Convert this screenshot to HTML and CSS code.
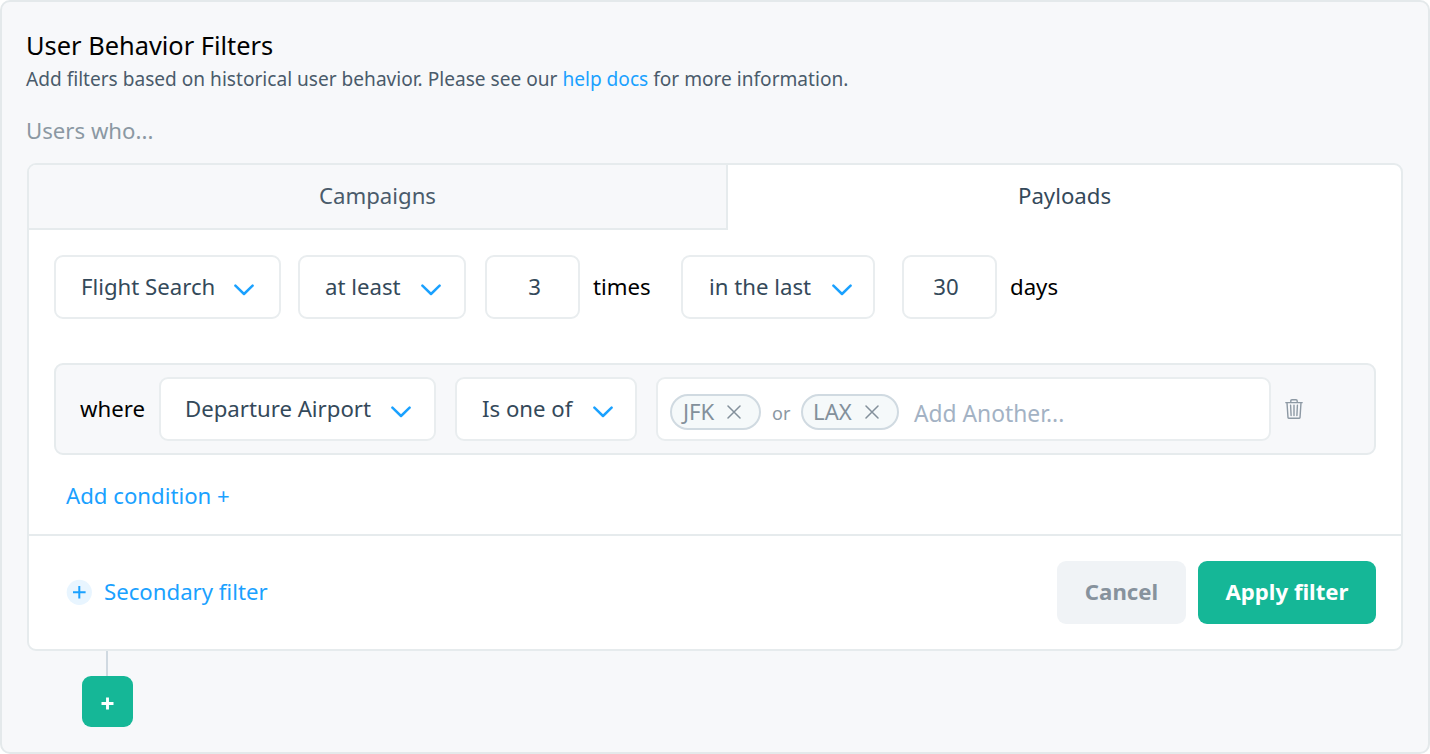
FILE: index.html
```html
<!DOCTYPE html>
<html lang="en">
<head>
<meta charset="utf-8">
<title>User Behavior Filters</title>
<link rel="stylesheet" href="styles.css">
</head>
<body>
<svg class="defs" width="0" height="0" aria-hidden="true">
  <symbol id="chevron" viewBox="0 0 20 12"><path d="M1.4 1.7 10 10l8.6-8.3" fill="none" stroke="currentColor" stroke-width="2.5" stroke-linecap="round" stroke-linejoin="round"/></symbol>
  <symbol id="cross" viewBox="0 0 14 14"><path d="M1 1l12 12M13 1 1 13" fill="none" stroke="currentColor" stroke-width="1.5" stroke-linecap="round"/></symbol>
</svg>
<main class="panel">
  <h1 class="title">User Behavior Filters</h1>
  <p class="subtitle">Add filters based on historical user behavior. Please see our <a class="link">help docs</a> for more information.</p>
  <p class="lead">Users who...</p>

  <section class="card">
    <nav class="tabs">
      <div class="tab tab-muted">Campaigns</div>
      <div class="tab tab-active">Payloads</div>
    </nav>

    <div class="rule">
      <div class="field w-event"><span>Flight Search</span><svg class="chevron"><use href="#chevron"/></svg></div>
      <div class="field w-compare"><span>at least</span><svg class="chevron"><use href="#chevron"/></svg></div>
      <div class="field number w-count">3</div>
      <span class="word word-times">times</span>
      <div class="field w-period"><span>in the last</span><svg class="chevron"><use href="#chevron"/></svg></div>
      <div class="field number w-days">30</div>
      <span class="word">days</span>
    </div>

    <div class="condition">
      <span class="where">where</span>
      <div class="field w-attribute"><span>Departure Airport</span><svg class="chevron"><use href="#chevron"/></svg></div>
      <div class="field w-operator"><span>Is one of</span><svg class="chevron"><use href="#chevron"/></svg></div>
      <div class="field values">
        <span class="chip chip-first">JFK<svg class="cross"><use href="#cross"/></svg></span>
        <span class="or">or</span>
        <span class="chip chip-second">LAX<svg class="cross"><use href="#cross"/></svg></span>
        <span class="placeholder">Add Another...</span>
      </div>
      <svg class="trash" viewBox="0 0 18 20"><g fill="none" stroke="currentColor" stroke-width="1.4" stroke-linejoin="round"><path d="M.3 3.6h17.4M5.8 3.4V2Q5.8.8 7 .8h4q1.2 0 1.2 1.2v1.4M2 3.8l1 14.8q0 .6.7.6h10.6q.7 0 .7-.6l1-14.8"/><path d="M5.6 6.3l.5 10.2M9 6.3v10.2M12.4 6.3l-.5 10.2" stroke-linecap="round"/></g></svg>
    </div>

    <a class="link add-condition">Add condition +</a>

    <footer class="actions">
      <svg class="badge" viewBox="0 0 26 26"><circle cx="13.3" cy="13.3" r="12.6" fill="#e8f5ff"/><path d="M7 13.3h12.6M13.3 7v12.6" stroke="#1aa1ff" stroke-width="2"/></svg>
      <a class="link secondary">Secondary filter</a>
      <button class="button cancel">Cancel</button>
      <button class="button apply">Apply filter</button>
    </footer>
  </section>

  <div class="branch">
    <div class="stem"></div>
    <button class="add"><svg width="13" height="13" viewBox="0 0 13 13"><path d="M.5 6.5h12M6.5.5v12" stroke="#fff" stroke-width="2.9"/></svg></button>
  </div>
</main>
</body>
</html>
```

FILE: styles.css
```css
* { box-sizing: border-box; }

body {
  margin: 0;
  background: #fff;
  font: 22.2px/30px "Noto Sans", sans-serif;
  color: #34495a;
}

.defs { position: absolute; }

.panel {
  height: 754px;
  padding: 28px 25px 0;
  background: #f7f8fa;
  border: 2px solid #e4e9eb;
  border-radius: 10px;
}

.title {
  margin: 0 0 0 -1px;
  font-size: 25.4px;
  line-height: 30px;
  font-weight: 400;
  color: #000;
}

.subtitle {
  margin: 4px 0 0 -1px;
  font-size: 19.1px;
  line-height: 30px;
  color: #4a5b6b;
}

.link { color: #1aa1ff; }

.lead {
  margin: 22px 0 0 -1px;
  color: #8b98a3;
}

.card {
  width: 1376px;
  height: 488px;
  margin-top: 17px;
  background: #fff;
  border: 2px solid #e6ebed;
  border-radius: 9px;
  overflow: hidden;
}

.tabs { display: flex; height: 65px; }

.tab {
  display: flex;
  align-items: center;
  justify-content: center;
}

.tab-muted {
  width: 699px;
  padding-bottom: 2px;
  background: #f7f8fa;
  border-right: 2px solid #e6ebed;
  border-bottom: 2px solid #e6ebed;
  color: #4a5b6b;
}

.tab-active { flex: 1; padding-bottom: 4px; }

.rule {
  display: flex;
  align-items: center;
  height: 64px;
  margin: 25px 0 0 25px;
}

.field {
  flex: none;
  display: flex;
  align-items: center;
  justify-content: space-between;
  height: 64px;
  padding: 0 24px;
  background: #fff;
  border: 2px solid #e9edef;
  border-radius: 9px;
  white-space: nowrap;
}

.number { justify-content: center; }

.w-event { width: 227px; padding-left: 25px; padding-right: 25px; }
.w-compare { width: 168px; margin-left: 17px; padding-left: 25px; padding-right: 23px; }
.w-count { width: 95px; margin-left: 19px; padding-left: 28px; }
.w-period { width: 194px; padding: 0 21px 0 26px; }
.w-days { width: 95px; margin-left: 27px; padding: 0 7px 0 0; }

.chevron {
  width: 20px;
  height: 12px;
  margin-top: 5px;
  color: #1aa1ff;
}

.word { margin-left: 13px; color: #000; }
.word-times { width: 88px; }

.rule span, .rule .number { line-height: 28px; padding-bottom: 1px; }

.condition {
  display: flex;
  align-items: center;
  width: 1322px;
  height: 92px;
  margin: 44px 0 0 25px;
  background: #f7f8fa;
  border: 2px solid #e6ebed;
  border-radius: 9px;
}

.where,
.w-attribute span,
.w-operator span { line-height: 28px; padding-bottom: 1px; }

.where { width: 79px; margin-left: 24px; color: #000; }
.w-attribute { width: 277px; padding-right: 23px; }
.w-operator { width: 182px; margin-left: 19px; padding: 0 22px 0 25px; }

.values {
  justify-content: flex-start;
  width: 615px;
  margin-left: 19px;
  padding: 6px 0 0 12px;
}

.chip {
  display: flex;
  align-items: center;
  justify-content: space-between;
  height: 36px;
  padding: 0 18px 1px 11px;
  background: #f5f9fa;
  border: 2px solid #d0dae1;
  border-radius: 18px;
  color: #83909b;
}

.chip-first { width: 91px; }
.chip-second { width: 98px; padding-left: 10px; padding-right: 18px; }

.cross { width: 14px; height: 14px; }
.or { width: 40px; padding: 2px 0 0 11px; font-size: 18px; color: #8b98a3; }
.placeholder { margin-left: 15px; padding-top: 3px; font-size: 22.8px; color: #a3b2c4; }
.trash { width: 18px; height: 20px; margin-left: 14px; color: #8d99a4; }

.add-condition {
  display: block;
  margin: 26px 0 0 37px;
}

.actions {
  display: flex;
  align-items: center;
  height: 116px;
  margin-top: 23px;
  padding: 0 25px 2px 37px;
  border-top: 2px solid #e6ebed;
}

.badge { width: 26px; height: 26px; }
.secondary { margin: 0 auto 0 12px; }

.button {
  height: 63px;
  padding: 0;
  border: 0;
  border-radius: 9px;
  font: 700 22.2px/30px "Noto Sans", sans-serif;
}

.cancel { width: 129px; background: #f0f3f6; color: #87929d; }
.apply { width: 178px; margin-left: 12px; background: #15b797; color: #fff; }

.branch { width: 51px; margin-left: 55px; }
.stem { width: 2px; height: 25px; margin-left: 24px; background: #d0d9e1; }

.add {
  display: flex;
  align-items: center;
  justify-content: center;
  width: 51px;
  height: 51px;
  padding: 3px 1px 0 0;
  border: 0;
  border-radius: 9px;
  background: #15b797;
}
```
